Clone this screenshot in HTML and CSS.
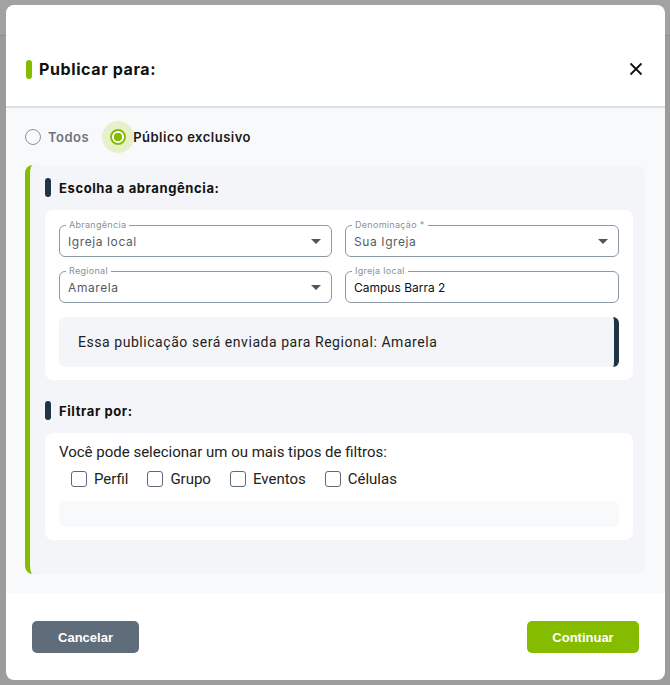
FILE: index.html
```html
<!DOCTYPE html>
<html lang="pt-BR">
  <head>
    <meta charset="UTF-8" />
    <meta name="viewport" content="width=device-width, initial-scale=1.0" />
    <title>Publicar para</title>
    <link rel="stylesheet" href="styles.css">
  </head>
  <body>
    <div class="dialog" role="dialog" aria-labelledby="dialog-title">
      <header class="dialog-header">
        <span class="mark mark-green"></span>
        <h1 id="dialog-title">Publicar para:</h1>
        <button class="close" aria-label="Fechar">
          <svg width="14" height="14" viewBox="0 0 14 14">
            <path d="M1.5 1.5 L12.5 12.5 M12.5 1.5 L1.5 12.5" stroke="#111" stroke-width="1.8" fill="none" />
          </svg>
        </button>
      </header>

      <main class="dialog-body">
        <div class="radios">
          <label class="radio">
            <span class="radio-dot"></span>
            <span class="radio-text">Todos</span>
          </label>
          <label class="radio checked">
            <span class="radio-dot"></span>
            <span class="radio-text">Público exclusivo</span>
          </label>
        </div>

        <section class="panel">
          <h2 class="section-title"><span class="mark mark-dark"></span>Escolha a abrangência:</h2>
          <div class="card">
            <div class="fields">
              <div class="field">
                <span class="field-label">Abrangência</span>
                <span class="field-value">Igreja local</span>
                <span class="caret"></span>
              </div>
              <div class="field">
                <span class="field-label">Denominação *</span>
                <span class="field-value">Sua Igreja</span>
                <span class="caret"></span>
              </div>
              <div class="field">
                <span class="field-label">Regional</span>
                <span class="field-value">Amarela</span>
                <span class="caret"></span>
              </div>
              <div class="field">
                <span class="field-label">Igreja local</span>
                <span class="field-value filled">Campus Barra 2</span>
              </div>
            </div>
            <div class="info">Essa publicação será enviada para Regional: Amarela</div>
          </div>

          <h2 class="section-title second"><span class="mark mark-dark"></span>Filtrar por:</h2>
          <div class="card card-filters">
            <p class="hint">Você pode selecionar um ou mais tipos de filtros:</p>
            <div class="checks">
              <label class="check"><span class="box"></span>Perfil</label>
              <label class="check"><span class="box"></span>Grupo</label>
              <label class="check"><span class="box"></span>Eventos</label>
              <label class="check"><span class="box"></span>Células</label>
            </div>
            <div class="empty"></div>
          </div>
        </section>
      </main>

      <footer class="dialog-footer">
        <button class="btn btn-cancel">Cancelar</button>
        <button class="btn btn-ok">Continuar</button>
      </footer>
    </div>
  </body>
</html>
```

FILE: styles.css
```css
* {
  box-sizing: border-box;
}

body {
  margin: 0;
  padding: 5px 5px 5px 6px;
  height: 685px;
  overflow: hidden;
  font-family: Inter, "Noto Sans", sans-serif;
  background: linear-gradient(#a2a2a2 0, #a2a2a2 35px, #8f8f8f 35px, #8f8f8f 36px, #9c9c9c 36px);
}

.dialog {
  width: 659px;
  height: 675px;
  background: #fff;
  border-radius: 8px;
  overflow: hidden;
  display: flex;
  flex-direction: column;
}

.dialog-header {
  height: 103px;
  padding: 27px 22px 0 20px;
  display: flex;
  align-items: center;
  border-bottom: 2px solid #d9e0e6;
}

.mark {
  display: inline-block;
  width: 6px;
  height: 19px;
  border-radius: 3px;
  flex-shrink: 0;
}

.mark-green {
  background: #86bc00;
}

.mark-dark {
  background: #1f3444;
  margin-right: 8px;
}

.dialog-header h1 {
  margin: 0 0 0 7px;
  font-size: 16px;
  font-weight: 700;
  letter-spacing: 0.6px;
  color: #111;
  flex: 1;
}

.close {
  border: 0;
  background: none;
  padding: 0;
  width: 14px;
  height: 14px;
  cursor: pointer;
}

.dialog-body {
  flex: 1;
  background: #f8f9fb;
  padding: 13px 20px 19px 19px;
}

.radios {
  display: flex;
  align-items: center;
  height: 32px;
  margin-bottom: 12px;
}

.radio {
  display: flex;
  align-items: center;
  font-size: 13px;
  font-weight: 600;
  letter-spacing: 0.5px;
  color: #6b7480;
  margin-right: 21px;
}

.radio-dot {
  width: 16px;
  height: 16px;
  border: 1.5px solid #8894a0;
  border-radius: 50%;
  margin-right: 7px;
}

.radio.checked {
  color: #1a1a1a;
}

.radio.checked .radio-dot {
  border: 2px solid #86bc00;
  box-shadow: 0 0 0 8px #e6f1cc;
  background: radial-gradient(circle, #86bc00 0, #86bc00 4px, #fff 4.5px);
}

.panel {
  height: 409px;
  background: #f3f5f8;
  border-left: 5px solid #86bc00;
  border-radius: 8px;
  padding: 13px 12px 34px 15px;
}

.section-title {
  display: flex;
  align-items: center;
  margin: 0 0 13px;
  font-size: 13px;
  font-weight: 700;
  letter-spacing: 0.6px;
  color: #111;
}

.section-title.second {
  margin-top: 21px;
}

.card {
  background: #fff;
  border-radius: 8px;
  padding: 15px 14px 13px;
}

.card-filters {
  padding-top: 10px;
}

.fields {
  display: grid;
  grid-template-columns: 273px 274px;
  gap: 14px 13px;
}

.field {
  position: relative;
  height: 32px;
  border: 1.5px solid #8d99a5;
  border-radius: 6px;
  display: flex;
  align-items: center;
  padding: 0 8px;
}

.field-label {
  position: absolute;
  top: -7px;
  left: 6px;
  padding: 0 3px;
  background: #fff;
  font-size: 9px;
  line-height: 11px;
  color: #8a9099;
  letter-spacing: 0.3px;
}

.field-value {
  flex: 1;
  font-size: 12px;
  letter-spacing: 0.6px;
  color: #555b62;
}

.field-value.filled {
  color: #111;
  letter-spacing: 0;
}

.caret {
  width: 0;
  height: 0;
  border-left: 5px solid transparent;
  border-right: 5px solid transparent;
  border-top: 5px solid #555;
  margin-right: 2px;
}

.info {
  margin-top: 14px;
  height: 50px;
  display: flex;
  align-items: center;
  padding-left: 19px;
  background: #f3f5f8;
  border-right: 5px solid #1f3444;
  border-radius: 6px;
  font-family: Roboto, "Liberation Sans", sans-serif;
  font-size: 14px;
  letter-spacing: 0.55px;
  color: #222;
}

.hint {
  margin: 0;
  font-family: Roboto, "Liberation Sans", sans-serif;
  font-size: 15px;
  color: #222;
  line-height: 18px;
}

.checks {
  display: flex;
  align-items: center;
  gap: 19px;
  padding-left: 12px;
  margin-top: 8px;
  height: 20px;
}

.check {
  display: flex;
  align-items: center;
  font-family: Roboto, "Liberation Sans", sans-serif;
  font-size: 15px;
  color: #222;
}

.box {
  width: 16px;
  height: 16px;
  border: 1.5px solid #5d6b78;
  border-radius: 3px;
  margin-right: 7px;
}

.empty {
  margin-top: 12px;
  height: 26px;
  background: #f8f9fb;
  border-radius: 6px;
}

.dialog-footer {
  height: 87px;
  padding: 28px 26px 0;
  display: flex;
  justify-content: space-between;
  align-items: flex-start;
}

.btn {
  height: 32px;
  border: 0;
  border-radius: 5px;
  font-family: "Liberation Sans", Arial, sans-serif;
  font-size: 13px;
  font-weight: 700;
  color: #fff;
  cursor: pointer;
}

.btn-cancel {
  width: 107px;
  background: #5f6d7a;
}

.btn-ok {
  width: 112px;
  background: #86bc00;
}
```
